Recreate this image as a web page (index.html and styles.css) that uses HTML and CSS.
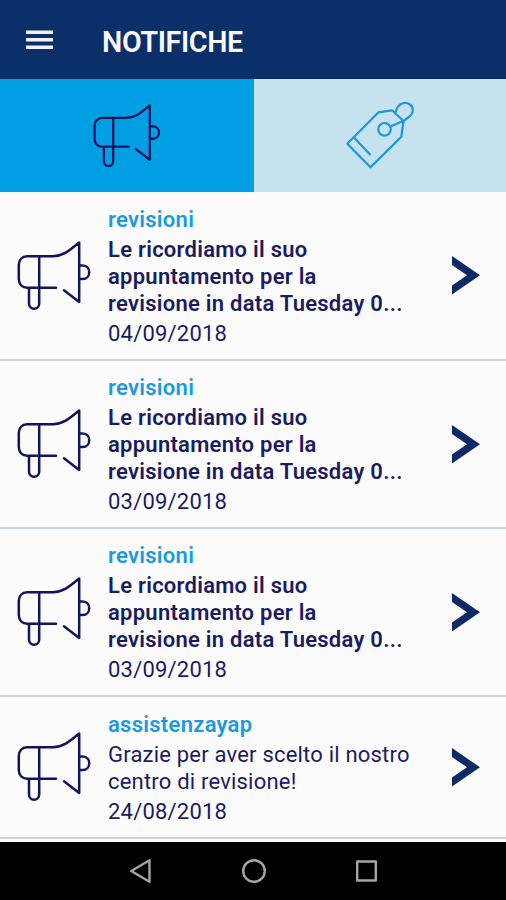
FILE: index.html
```html
<!DOCTYPE html>
<html lang="it">
<head>
    <meta charset="UTF-8">
    <meta name="viewport" content="width=device-width, initial-scale=1.0">
    <title>Notifiche</title>
    <link rel="stylesheet" href="styles.css">
</head>
<body>
    <!-- Icone usate più volte nella pagina -->
    <svg class="simboli">
        <symbol id="megafono" viewBox="0 0 76 72">
            <path d="M40 47.7H11C6 47.7 2.8 44 2.8 39V25C2.8 20 6 16.2 11 16.2H37C47 16.2 53 11 63.2 2.5V62L48 50.3M23.2 16.2V63.5C23.2 70.5 13 70.5 13 63.5V47.7M23 47.7H40M63.2 25.5H66.5C75.5 25.5 75.5 39 66.5 39H63.2"/>
        </symbol>
        <symbol id="freccia" viewBox="0 0 28 39">
            <path d="M0 0L28 19.3L0 38.6V29.6L15 19.3L0 9Z"/>
        </symbol>
    </svg>
    <header class="barra">
        <svg class="menu" width="27" height="20" viewBox="0 0 27 20">
            <path d="M0 2.2H27M0 9.7H27M0 17.2H27"/>
        </svg>
        <h1 class="titolo">NOTIFICHE</h1>
    </header>
    <nav class="schede">
        <div class="scheda attiva">
            <svg class="megafono" width="69.5" height="66"><use href="#megafono"/></svg>
        </div>
        <div class="scheda">
            <svg class="etichetta" width="70" height="70" viewBox="0 0 70 70">
                <path d="M2.3 42.7L33.5 11.3L47 9.3L58.5 20L56.3 35.7L25.5 66.3ZM9 36.5L25 53.5M45.5 25.5L59 19.5C64 16.5 67.8 12.5 67.8 9.5C68 4 63 1.5 59 2C54 2.8 51.5 6.5 50.5 11.5"/>
                <circle cx="39.5" cy="28.3" r="6.3"/>
            </svg>
        </div>
    </nav>
    <main class="lista">
        <div class="notifica">
            <svg class="megafono" width="76" height="72"><use href="#megafono"/></svg>
            <div class="testo">
                <h2 class="categoria">revisioni</h2>
                <p class="messaggio nuovo">Le ricordiamo il suo<br>appuntamento per la<br>revisione in data Tuesday 0...</p>
                <p class="data">04/09/2018</p>
            </div>
            <svg class="freccia" width="28" height="39"><use href="#freccia"/></svg>
        </div>
        <div class="notifica">
            <svg class="megafono" width="76" height="72"><use href="#megafono"/></svg>
            <div class="testo">
                <h2 class="categoria">revisioni</h2>
                <p class="messaggio nuovo">Le ricordiamo il suo<br>appuntamento per la<br>revisione in data Tuesday 0...</p>
                <p class="data">03/09/2018</p>
            </div>
            <svg class="freccia" width="28" height="39"><use href="#freccia"/></svg>
        </div>
        <div class="notifica">
            <svg class="megafono" width="76" height="72"><use href="#megafono"/></svg>
            <div class="testo">
                <h2 class="categoria">revisioni</h2>
                <p class="messaggio nuovo">Le ricordiamo il suo<br>appuntamento per la<br>revisione in data Tuesday 0...</p>
                <p class="data">03/09/2018</p>
            </div>
            <svg class="freccia" width="28" height="39"><use href="#freccia"/></svg>
        </div>
        <div class="notifica">
            <svg class="megafono" width="76" height="72"><use href="#megafono"/></svg>
            <div class="testo">
                <h2 class="categoria">assistenzayap</h2>
                <p class="messaggio">Grazie per aver scelto il nostro<br>centro di revisione!</p>
                <p class="data">24/08/2018</p>
            </div>
            <svg class="freccia" width="28" height="39"><use href="#freccia"/></svg>
        </div>
    </main>
    <footer class="navigazione">
        <svg width="24" height="26" viewBox="0 0 24 26"><path d="M20.5 2.2V23.8L2.3 13Z"/></svg>
        <svg width="26" height="26" viewBox="0 0 26 26"><circle cx="13" cy="13" r="10.8"/></svg>
        <svg width="24" height="26" viewBox="0 0 24 26"><path d="M2.2 3.5H20.8V22.5H2.2Z"/></svg>
    </footer>
</body>
</html>
```

FILE: styles.css
```css
body{
    margin:0;
    height:900px;
    display:flex;
    flex-direction:column;
    overflow:hidden;
    background-color:#fbfbfc;
    color:#1b1b60;
    font-family:Roboto, "Liberation Sans", sans-serif;
}
h1, h2, p{
    margin:0;
}
svg{
    display:block;
    flex:none;
    fill:none;
    stroke-linejoin:round;
    stroke-linecap:round;
}
.simboli{
    display:none;
}
.barra{
    height:79px;
    box-sizing:border-box;
    padding:2px 26px 0;
    display:flex;
    align-items:center;
    gap:49px;
    background-color:#0a2f69;
}
.menu{
    margin-bottom:2px;
    stroke:#f6f3ff;
    stroke-width:3.6;
    stroke-linecap:butt;
}
.titolo{
    padding-top:2px;
    color:#faf9ff;
    font-size:28.6px;
    font-weight:600;
    line-height:34px;
    letter-spacing:-0.35px;
}
.schede{
    height:113px;
    display:grid;
    grid-template-columns:254px 1fr;
}
.scheda{
    display:flex;
    align-items:center;
    justify-content:center;
    background-color:#c6e2ef;
}
.scheda.attiva{
    background-color:#009fe3;
}
.megafono{
    stroke:#14145c;
    stroke-width:2.5;
}
.etichetta{
    stroke:#1b97dc;
    stroke-width:2.2;
}
.notifica{
    height:168px;
    box-sizing:border-box;
    padding:0 26px 0 16px;
    display:flex;
    align-items:center;
    border-bottom:2px solid #c3d3ec;
}
.notifica:first-child{
    height:169px;
}
.notifica:last-child{
    height:142px;
}
.testo{
    flex:1;
    padding:1px 0 0 16px;
    white-space:nowrap;
    font-size:22px;
    line-height:27px;
    letter-spacing:0.2px;
}
.categoria{
    padding-bottom:3px;
    color:#1b9ae0;
    font-size:22px;
    font-weight:600;
    letter-spacing:0.28px;
}
.nuovo{
    font-weight:600;
    letter-spacing:0.26px;
}
.data{
    padding-top:3px;
}
.freccia{
    fill:#0b2a66;
}
.navigazione{
    height:58px;
    margin-top:auto;
    padding-left:1px;
    display:flex;
    align-items:center;
    justify-content:center;
    gap:88px;
    background-color:#000;
}
.navigazione svg{
    stroke:#a5a5a5;
    stroke-width:2.4;
}
```
